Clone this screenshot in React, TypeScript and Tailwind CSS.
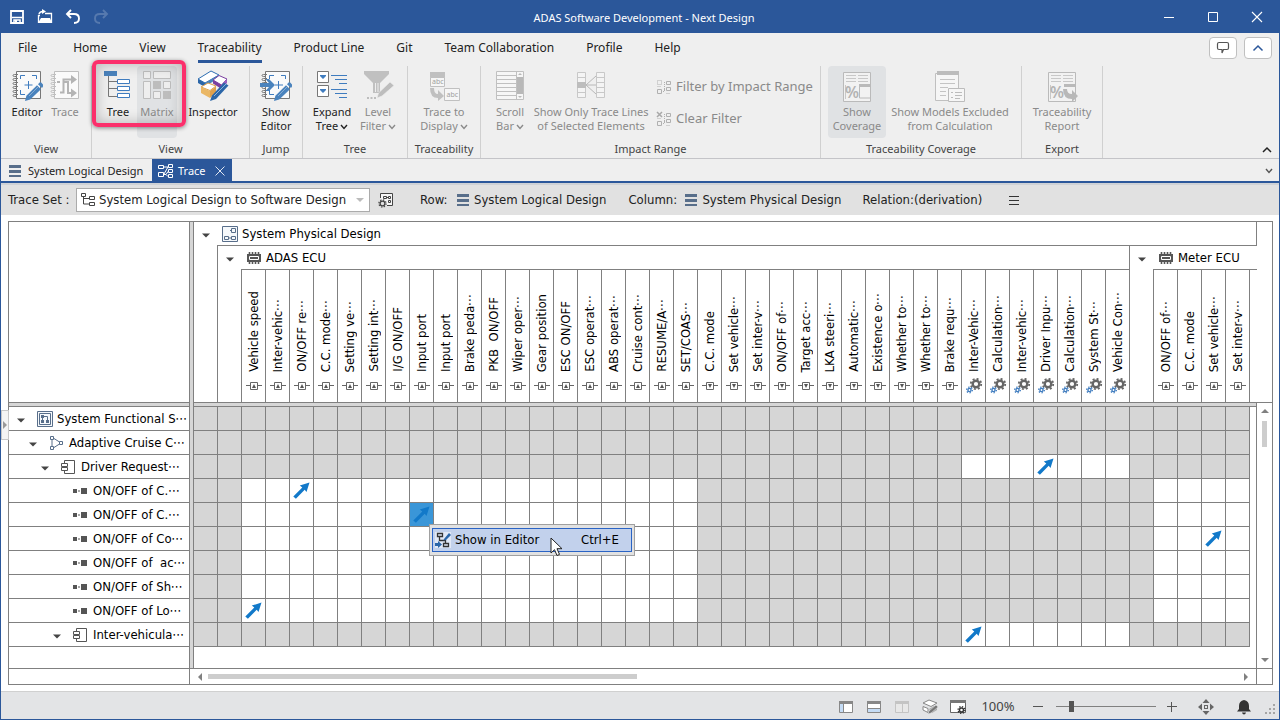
import React from 'react';
import clsx from 'clsx';

type IconProps = { className?: string };

/* ---------- shared pieces ---------- */

const Svg: React.FC<{ w?: number; h?: number; className?: string; children: React.ReactNode }> = ({ w = 16, h = 16, className, children }) => (
  <svg width={w} height={h} viewBox={`0 0 ${w} ${h}`} fill="none" className={clsx('shrink-0', className)} aria-hidden="true">
    {children}
  </svg>
);

const Chevron: React.FC<IconProps> = ({ className }) => (
  <svg width="8" height="6" viewBox="0 0 8 6" fill="none" className={clsx('inline-block ml-0.5', className)} aria-hidden="true">
    <path d="M1 1l3 3.5L7 1" stroke="currentColor" strokeWidth="1.4" />
  </svg>
);

const Triangle = () => (
  <Svg w={12} h={12}>
    <path d="M2 5.5h8L6 9.500z" fill="#444" />
  </Svg>
);

const ListIcon = () => (
  <Svg w={13} h={16}>
    <path d="M0 2h12v3H0zM0 7h12v3H0zM0 12h12v2H0z" fill="#586e8a" />
  </Svg>
);

const Pencil: React.FC<{ color: string }> = ({ color }) => (
  <g>
    <path d="M14 31l1.4-5.2L26 15.2l4 4L19.2 29.6z" fill={color} />
    <path d="M27 14.2l1.6-1.6q.8-.8 1.6 0l2 2q.8.8 0 1.6L31 18z" fill={color} />
    <path d="M18 26l9-9" stroke="#fff" strokeOpacity=".35" />
  </g>
);

const Notebook: React.FC<{ color: string }> = ({ color }) => (
  <g>
    <path d="M5.5 1.5h24v27h-24z" fill="#fff" fillOpacity=".7" stroke={color} />
    {[5, 9, 13, 17, 21, 25].map((y) => (
      <path key={y} d={`M7 ${y - 1}.5H3.5q-1.5 0-1.5 1t1.5 1H5`} stroke={color} />
    ))}
  </g>
);

/* ---------- ribbon icons, 32px ---------- */

const EditorIcon = () => (
  <Svg w={32} h={32}>
    <Notebook color="#777" />
    <path d="M9.5 9V5.5H14M21 5.5h4.5V9M9.5 20v4.5H14M17.5 11v8M13.5 15h8" stroke="#3f7cbf" />
    <Pencil color="#4a83bd" />
  </Svg>
);

const ShowEditorIcon = () => (
  <Svg w={32} h={32}>
    <Notebook color="#777" />
    <path d="M9.5 9V5.5H14M21 5.5h4.5V9M9.5 20v4.5H14M18.5 11v8M15 15h8" stroke="#3f7cbf" />
    <path d="M0 13h9L5.5 9H9l6 6-6 6H5.5L9 17H0z" fill="#4a83bd" />
    <Pencil color="#4a83bd" />
  </Svg>
);

const TraceIcon = () => (
  <Svg w={32} h={32}>
    <Notebook color="#bfbfbf" />
    <path d="M8 12h3M11 22.5h3.5v-13H24M14 12h5v11h6" stroke="#b4b4b4" strokeWidth="2" />
    <path d="M22 5l6 4.5-6 4.5zM22 18.5l6 4.5-6 4.5z" fill="#b4b4b4" />
  </Svg>
);

const TreeIcon = () => (
  <Svg w={32} h={32}>
    <path d="M2 1h13v5H2z" fill="#4a83bd" />
    <path d="M6.5 6v20.500H15M6.500 11.500H15M6.500 18.500H15" stroke="#777" />
    <path d="M15.5 9.5h12v4h-12zM15.5 16.5h12v4h-12zM15.5 23.5h12v4h-12z" fill="#fff" stroke="#3f7cbf" />
  </Svg>
);

const MatrixIcon = () => (
  <Svg w={32} h={32}>
    <path d="M2.5 1.5h7v7h-7zM12.5 1.5h17v7h-17zM2.5 11.5h7v17h-7zM22.5 11.5h7v7h-7zM12.5 21.5h7v7h-7z" fill="#eee" stroke="#bdbdbd" />
    <path d="M12 11h8v8h-8zM22 21h8v8h-8z" fill="#bdbdbd" />
  </Svg>
);

const InspectorIcon = () => (
  <Svg w={32} h={32}>
    <path d="M1 9L14 1l8 4L8 13z" fill="#fff" stroke="#2f6fb3" />
    <path d="M1 9l7 4v4l-7-4z" fill="#2b66a8" />
    <path d="M8 13l13-7.5v3L8 16.5z" fill="#4a83bd" />
    <path d="M16 10l6-4.5 8 3.500-5.500 6z" fill="#fff" stroke="#7b3fa0" />
    <path d="M16 10l8.5 5v4L16 13.5z" fill="#7b3fa0" />
    <path d="M24.5 15L30 9v4l-5.5 6z" fill="#9a5fc0" />
    <path d="M4 17l7-4 8 3-6 4.5z" fill="#fff" stroke="#dfa04b" />
    <path d="M4 17l9 4v7l-9-5z" fill="#eab765" />
    <path d="M13 21l6-4.5v6L13 28z" fill="#dfa04b" />
    <path d="M13 31l2-5.500L27 12.500l4.500 3L19 29z" fill="#2b66a8" />
    <path d="M17 26L29 14" stroke="#8db4dd" />
  </Svg>
);

const ExpandTreeIcon = () => (
  <Svg w={32} h={32}>
    <path d="M1.500 1.500h11v11h-11zM1.500 15.500h11v11h-11z" fill="#fff" stroke="#777" />
    <path d="M4 5h6v1L7 9 4 6zM4 19h6v1l-3 3-3-3z" fill="#3f7cbf" />
    <path d="M15 5.500h16M19 9.500h12M23 13.500h8M15 19.500h16M19 23.500h12M23 27.500h8" stroke="#3f7cbf" />
  </Svg>
);

const FunnelIcon = () => (
  <Svg w={32} h={32}>
    <path d="M2 1h25v3l-9 9v10h-7V13L2 4z" fill="#c0c0c0" />
    <path d="M13.500 13v9M16 13v9" stroke="#eee" />
    <path d="M15 28l1.500-5L28 12l4 3.500L20 26z" fill="#bdbdbd" stroke="#efefef" strokeWidth=".6" />
    <path d="M5 28h9" stroke="#bdbdbd" strokeWidth="2" strokeDasharray="2 1.500" />
  </Svg>
);

const TraceDisplayIcon = () => (
  <Svg w={32} h={32}>
    <path d="M2 2h15v6H2z" fill="#c0c0c0" />
    <path d="M2.500 7.500h14v9h-14zM16.500 18.500h15v12h-15z" fill="#f6f6f6" stroke="#c0c0c0" />
    <text x="4" y="14" fontSize="7" fill="#a0a0a0" fontFamily="Noto Sans, sans-serif">abc</text>
    <text x="18.500" y="27" fontSize="7" fill="#a0a0a0" fontFamily="Noto Sans, sans-serif">abc</text>
    <path d="M2 18h4q0 6 4 6v-4l6 6-6 5v-3q-8 0-8-10z" fill="#c0c0c0" />
  </Svg>
);

const ScrollBarIcon = () => (
  <Svg w={32} h={32}>
    <path d="M2.500 1.500h27v28h-27z" fill="#f6f6f6" stroke="#c0c0c0" />
    <path d="M3 5.500h19M3 9.500h19M3 13.500h19M3 17.500h19M3 21.500h19M3 25.500h19M22.500 2v27" stroke="#c0c0c0" />
    <path d="M23 7h6v17h-6zM24 5h4l-2-2zM24 26h4l-2 2z" fill="#b8b8b8" />
  </Svg>
);

const TraceLinesIcon = () => (
  <Svg w={32} h={32}>
    <path d="M2.500 2.500h8v25h-8zM21.500 2.500h8v25h-8zM3 7.500h7M3 12.500h7M3 17.500h7M3 22.500h7M22 7.500h7M22 12.500h7M22 17.500h7M22 22.500h7" fill="#f4f4f4" stroke="#c8c8c8" />
    <path d="M2 12h9v6H2z" fill="#bdbdbd" />
    <path d="M11 15L21 6M11 15h10M11 15l10 9" stroke="#b8b8b8" />
  </Svg>
);

const CoverageIcon: React.FC<{ report?: boolean }> = ({ report }) => (
  <Svg w={32} h={32}>
    <path d="M2.500 2.500h27v29h-27z" fill="#f2f2f2" stroke="#bababa" />
    <path d="M5 5.500h10M5 8.500h10M5 11.500h10M17 5.500h10M17 8.500h10M17 11.500h10" stroke="#c8c8c8" />
    <path d="M18 14h11v3H18z" fill="#bababa" />
    <path d="M4.500 15v14" stroke="#c8c8c8" />
    <text x="4" y="28" fontSize="16" fontWeight="600" fill="#b4b4b4" fontFamily="Noto Sans, sans-serif">%</text>
    {report ? <path d="M17 19h4q0 5 5 5v-4l6 6-6 6v-3q-9 0-9-10z" fill="#b8b8b8" /> : <path d="M18.500 16v12h11" stroke="#bababa" />}
  </Svg>
);

const ExcludedIcon = () => (
  <Svg w={32} h={34}>
    <path d="M1.500 3.500h23v27h-23z" fill="#f6f6f6" stroke="#c0c0c0" />
    <path d="M3 1h22v4H3z" fill="#bcbcbc" />
    <path d="M6 9.500h15M6 13.500h15M6 17.500h8M6 21.500h6M6 25.500h6" stroke="#c4c4c4" />
    <path d="M14.500 18.500h16v13h-16z" fill="#f6f6f6" stroke="#bcbcbc" />
    <path d="M17 22.500h2M17 27.500h2M21 22.500h7M21 25.500h7M21 28.500h5" stroke="#bcbcbc" />
  </Svg>
);

const FilterSmallIcon: React.FC<{ clear?: boolean }> = ({ clear }) => (
  <Svg>
    {clear ? <path d="M1 1l5 5M6 1L1 6" stroke="#a8a8a8" strokeWidth="1.500" /> : <path d="M1.500 1.500h4v4h-4z" stroke="#b0b0b0" strokeDasharray="1 1" />}
    <path d="M1.500 10.500h4v4h-4zM10.500 2.500h4v3h-4zM10.500 8.500h4v3h-4z" stroke="#b0b0b0" />
    <path d="M5 12.500h3M8.500 3v10M8 3.500h2M8 10.500h2M10.500 14.500h4M1.500 7.500h4" stroke="#b0b0b0" strokeDasharray="1 1" />
  </Svg>
);

/* ---------- model element icons ---------- */

const DiagramIcon = () => (
  <Svg>
    <path d="M.5.5h15v15H.5z" fill="#f5f8fb" stroke="#586e8a" />
    <path d="M9.500 2.500h4v4h-4zM2.500 10.500h4v3h-4zM9.500 10.500h4v3h-4zM6.500 12h3M8 4.500h1" stroke="#586e8a" />
  </Svg>
);

const FunctionalIcon = () => (
  <Svg>
    <path d="M.5.5h15v15H.5z" fill="#f5f8fb" stroke="#586e8a" />
    <path d="M2.500 2.500h11v11h-11z" stroke="#586e8a" />
    <path d="M4 4h3v3H4zM9 9h3v3H9zM4 9h3v3H4z" fill="#586e8a" />
    <path d="M5.500 6v4M6 5.500h4.500V10" stroke="#586e8a" />
  </Svg>
);

const NodesIcon = () => (
  <Svg>
    <path d="M1.500 1.500h3v3h-3zM1.500 11.500h3v3h-3zM10.500 6.500h3v3h-3zM3 5v6M5 3.500l5.500 3.500M5 12.500L10.500 9" stroke="#586e8a" />
  </Svg>
);

const ComponentIcon = () => (
  <Svg>
    <path d="M3.500 4V1.500h10v13h-10V12M3.500 7.500v1" stroke="#555" />
    <path d="M.5 4.500h6v3h-6zM.5 8.500h6v3h-6z" stroke="#555" />
  </Svg>
);

const LeafIcon = () => (
  <Svg>
    <path d="M0 6h4v4H0zM8 5h6v6H8zM5 7.500h2v1H5z" fill="#555" />
  </Svg>
);

const ChipIcon = () => (
  <Svg>
    <path d="M1 4h14v8H1z" fill="#555" />
    <path d="M3.500 2v2M6.500 2v2M9.500 2v2M12.500 2v2M3.500 12v2M6.500 12v2M9.500 12v2M12.500 12v2" stroke="#555" strokeWidth="1.600" />
    <path d="M3.500 6.500h9v3h-9z" stroke="#fff" />
  </Svg>
);

const PortIcon: React.FC<{ down?: boolean }> = ({ down }) => (
  <Svg>
    <path d="M0 7.500h4M12 7.500h4M4.500 4.500h7v7h-7z" stroke="#666" />
    <path d={down ? 'M6 6h4L8 10z' : 'M6 10h4L8 6z'} fill="#555" />
  </Svg>
);

const GearsIcon = () => (
  <Svg w={18} h={16}>
    <circle cx="11" cy="6" r="3.300" stroke="#666" strokeWidth="2.400" />
    <circle cx="11" cy="6" r="5.200" stroke="#666" strokeWidth="1.800" strokeDasharray="2 2.080" />
    <circle cx="4.500" cy="12" r="1.600" stroke="#3f7cbf" strokeWidth="1.400" />
    <circle cx="4.500" cy="12" r="2.900" stroke="#3f7cbf" strokeWidth="1.200" strokeDasharray="1.400 1.600" />
  </Svg>
);

const ArrowIcon = () => (
  <Svg w={18} h={18}>
    <path d="M.3 14.500l9-9-2.500-1.900L16.500.500 13.500 10l-1.800-2.300-8.800 9z" fill="#1279c9" />
  </Svg>
);

/* ---------- title bar and menu ---------- */

const TitleBar = () => (
  <header className="flex h-8 items-center bg-[#2b579a] px-2 text-white">
    <div className="flex flex-1 items-center gap-3">
      <button aria-label="Save">
        <Svg>
          <path d="M2 2h12v12H2z" stroke="#fff" strokeWidth="1.800" />
          <path d="M3 8.500h10M5 15v-4h6v4" stroke="#fff" strokeWidth="1.500" />
          <path d="M6 11h2v3H6z" fill="#fff" />
        </Svg>
      </button>
      <button aria-label="Open">
        <Svg>
          <path d="M1 6.500h2M8 4.500h6.500V14M1.500 6v8" stroke="#fff" strokeWidth="1.300" />
          <path d="M1 14l3-5h9l2 5z" fill="#fff" />
          <path d="M2 5q1-3 5-2.500" stroke="#fff" strokeWidth="1.500" />
          <path d="M5 0l4 2.500L5 5z" fill="#fff" />
        </Svg>
      </button>
      <button aria-label="Undo">
        <Svg>
          <path d="M6 1L2 5l4 4M2 5h7q5 0 5 4.500T9 14" stroke="#fff" strokeWidth="1.900" />
        </Svg>
      </button>
      <button aria-label="Redo" disabled className="opacity-20">
        <Svg>
          <path d="M10 1l4 4-4 4M14 5H7Q2 5 2 9.500T7 14" stroke="#fff" strokeWidth="1.900" />
        </Svg>
      </button>
    </div>
    <h1 className="pt-0.5 text-[11px]">ADAS Software Development - Next Design</h1>
    <div className="-mr-2 flex flex-1 justify-end">
      <button aria-label="Minimize" className="flex w-11 justify-center"><Svg w={12} h={12}><path d="M1 6.500h10" stroke="#fff" /></Svg></button>
      <button aria-label="Maximize" className="flex w-11 justify-center"><Svg w={12} h={12}><path d="M1.500 1.500h9v9h-9z" stroke="#fff" /></Svg></button>
      <button aria-label="Close" className="flex w-11 justify-center"><Svg w={12} h={12}><path d="M1 1l10 10M11 1L1 11" stroke="#fff" strokeWidth="1.100" /></Svg></button>
    </div>
  </header>
);

const MENUS = ['File', 'Home', 'View', 'Traceability', 'Product Line', 'Git', 'Team Collaboration', 'Profile', 'Help'];

const MenuBar = () => (
  <nav className="flex h-[33px] items-start justify-between pr-[7px] pl-px">
    <ul className="flex h-full text-[12px]">
      {MENUS.map((m) => (
        <li key={m} className={clsx('flex flex-col px-4', m === 'Home' && 'pl-5')}>
          <button className={clsx('h-[30px] border-b-[3px] pt-0.5', m === 'Traceability' ? 'border-[#2b579a]' : 'border-transparent')}>{m}</button>
        </li>
      ))}
    </ul>
    <div className="flex gap-[7px] pt-1">
      <button aria-label="Feedback" className="flex h-[22px] w-7 items-center justify-center rounded-sm border border-[#c0c0c0] bg-white">
        <Svg w={14} h={14}><path d="M3 1.500h8q1.500 0 1.500 1.500v4q0 1.500-1.500 1.500H7.500L6 12V8.500H3Q1.500 8.500 1.500 7V3Q1.500 1.500 3 1.500z" stroke="#555" strokeWidth="1.200" /></Svg>
      </button>
      <button aria-label="Collapse" className="flex h-[22px] w-7 items-center justify-center rounded-sm border border-[#c0c0c0] bg-white">
        <Svg w={12} h={12}><path d="M1.500 8.500L6 4l4.500 4.500" stroke="#2b579a" strokeWidth="1.500" /></Svg>
      </button>
    </div>
  </nav>
);

/* ---------- ribbon ---------- */

type RibbonButtonProps = {
  icon: React.ReactNode;
  lines: string[];
  menu?: boolean;
  disabled?: boolean;
  active?: boolean;
  className?: string;
};

const RibbonButton: React.FC<RibbonButtonProps> = ({ icon, lines, menu, disabled, active, className }) => (
  <button
    disabled={disabled}
    className={clsx(
      'flex h-[72px] shrink-0 flex-col items-center rounded-sm pt-1 text-[11px] leading-[14px] whitespace-nowrap',
      disabled ? 'text-[#8a8a8a]' : 'text-[#222]',
      active && 'bg-[#e0e2e4]',
      className,
    )}
  >
    <span className="flex h-[35px] items-start">{icon}</span>
    {lines.map((line, i) => (
      <span key={line}>
        {line}
        {menu && i === lines.length - 1 && <Chevron />}
      </span>
    ))}
  </button>
);

const RibbonGroup: React.FC<{ label: string; className?: string; children: React.ReactNode }> = ({ label, className, children }) => (
  <section className={clsx('flex shrink-0 flex-col border-r border-[#d0d0d0]', className)}>
    <div className="flex h-[74px] justify-center">{children}</div>
    <h2 className="pt-px text-center text-[11px] leading-[18px] text-[#444]">{label}</h2>
  </section>
);

const Ribbon = () => (
  <div className="flex h-[93px] border-b border-[#c4c4c8]">
    <RibbonGroup label="View" className="w-[91px]">
      <RibbonButton icon={<EditorIcon />} lines={['Editor']} className="w-[38px]" />
      <RibbonButton icon={<TraceIcon />} lines={['Trace']} disabled className="w-[38px]" />
    </RibbonGroup>
    <RibbonGroup label="View" className="relative w-[158px]">
      <RibbonButton icon={<TreeIcon />} lines={['Tree']} className="ml-[7px] w-[38px]" />
      <RibbonButton icon={<MatrixIcon />} lines={['Matrix']} disabled active className="w-10" />
      <RibbonButton icon={<InspectorIcon />} lines={['Inspector']} className="w-[72px]" />
      {/* callout ring over the two view switches */}
      <div className="pointer-events-none absolute -top-1.5 left-0 h-[67px] w-[94px] rounded-md border-4 border-[#fb2f6b] shadow-[0_1px_4px_rgba(0,0,0,0.45),inset_0_0_14px_rgba(0,0,0,0.25)]" />
    </RibbonGroup>
    <RibbonGroup label="Jump" className="w-[53px]">
      <RibbonButton icon={<ShowEditorIcon />} lines={['Show', 'Editor']} />
    </RibbonGroup>
    <RibbonGroup label="Tree" className="w-[105px]">
      <RibbonButton icon={<ExpandTreeIcon />} lines={['Expand', 'Tree']} menu className="w-[46px]" />
      <RibbonButton icon={<FunnelIcon />} lines={['Level', 'Filter']} menu disabled className="w-[46px]" />
    </RibbonGroup>
    <RibbonGroup label="Traceability" className="w-[73px]">
      <RibbonButton icon={<TraceDisplayIcon />} lines={['Trace to', 'Display']} menu disabled />
    </RibbonGroup>
    <RibbonGroup label="Impact Range" className="w-[340px]">
      <RibbonButton icon={<ScrollBarIcon />} lines={['Scroll', 'Bar']} menu disabled className="w-11" />
      <RibbonButton icon={<TraceLinesIcon />} lines={['Show Only Trace Lines', 'of Selected Elements']} disabled className="w-[118px]" />
      <div className="flex flex-col gap-3 pt-[11px] pl-1.5 text-[13px] text-[#8a8a8a]">
        <button disabled className="flex h-5 items-center gap-1 whitespace-nowrap"><FilterSmallIcon />Filter by Impact Range</button>
        <button disabled className="flex h-5 items-center gap-1 whitespace-nowrap"><FilterSmallIcon clear />Clear Filter</button>
      </div>
    </RibbonGroup>
    <RibbonGroup label="Traceability Coverage" className="w-[201px]">
      <RibbonButton icon={<CoverageIcon />} lines={['Show', 'Coverage']} disabled active className="w-[58px]" />
      <RibbonButton icon={<ExcludedIcon />} lines={['Show Models Excluded', 'from Calculation']} disabled className="w-[128px]" />
    </RibbonGroup>
    <RibbonGroup label="Export" className="w-[81px]">
      <RibbonButton icon={<CoverageIcon report />} lines={['Traceability', 'Report']} disabled />
    </RibbonGroup>
    <div className="flex flex-1 items-end justify-end p-1">
      <button aria-label="Collapse ribbon"><Svg w={16} h={8}><path d="M4 6l4-4 4 4" stroke="#222" strokeWidth="1.500" /></Svg></button>
    </div>
  </div>
);

/* ---------- document tabs and trace toolbar ---------- */

const DocumentTabs = () => (
  <div className="flex h-6 items-stretch border-b-2 border-[#2b579a] text-[11px]">
    <button className="flex w-[151px] items-center gap-1.5 pt-0.5 pl-2"><ListIcon />System Logical Design</button>
    <div className="flex w-20 items-center gap-1 bg-[#2b579a] pt-0.5 pl-1.5 text-white">
      <Svg>
        <path d="M.5 2.500h5v3h-5zM.5 9.500h5v4h-5zM10.500 1.500h4v3h-4zM10.500 6.500h4v3h-4zM10.500 11.500h4v3h-4zM6 4h4M6 11.500h2l2-3M8 11.500l2 2M6 11l4-7" stroke="#fff" />
      </Svg>
      Trace
      <button aria-label="Close tab" className="ml-1"><Svg w={12} h={12}><path d="M1.500 1.500l9 9M10.500 1.500l-9 9" stroke="#dfe6f1" /></Svg></button>
    </div>
    <div className="flex flex-1 items-center justify-end pr-1.5">
      <button aria-label="Tab list" className="text-[#555]"><Chevron /></button>
    </div>
  </div>
);

const TraceToolbar = () => (
  <div className="flex h-8 items-center border-t-2 border-[#cfd2d6] bg-[#e1e1e1] pl-[7px] font-['DejaVu_Sans_Condensed','DejaVu_Sans',sans-serif] text-[13px] text-[#222]">
    <label htmlFor="trace-set" className="w-[68px] whitespace-nowrap">Trace Set :</label>
    <div className="flex h-6 w-[294px] items-center border border-[#ababab] bg-white pl-1">
      <Svg>
        <path d="M.5 1.500h4v3h-4zM8.500 4.500h5v3h-5zM8.500 10.500h5v3h-5zM2.500 5v7h6M2.500 6.500h6" stroke="#444" />
      </Svg>
      <select id="trace-set" className="flex-1 appearance-none bg-transparent pl-0.5 outline-none">
        <option>System Logical Design to Software Design</option>
      </select>
      <Svg w={16} h={16}><path d="M3 6h8l-4 4z" fill="#bbb" /></Svg>
    </div>
    <button aria-label="Trace set settings" className="ml-2">
      <Svg>
        <path d="M2.500 6V1.500h12v12H9" fill="#f6f6f6" stroke="#444" />
        <path d="M5.500 4.500h3v2h-3zM10.500 4.500h2v2h-2zM10.500 8.500h2v2h-2zM8.500 5.500h2" stroke="#444" />
        <circle cx="4.500" cy="11.500" r="2.400" fill="#e1e1e1" stroke="#444" strokeWidth="1.300" />
        <circle cx="4.500" cy="11.500" r="3.600" stroke="#444" strokeWidth="1.200" strokeDasharray="1.400 1.430" />
      </Svg>
    </button>
    <dl className="flex items-center whitespace-nowrap">
      <dt className="ml-[26px] w-[37px]">Row:</dt>
      <dd className="flex items-center gap-1"><ListIcon />System Logical Design</dd>
      <dt className="ml-[22px] w-[57px]">Column:</dt>
      <dd className="flex items-center gap-1"><ListIcon />System Physical Design</dd>
      <dt className="ml-[21px]">Relation:</dt>
      <dd>(derivation)</dd>
    </dl>
    <button aria-label="More" className="ml-6"><Svg><path d="M3 4.500h10M3 8.500h10M3 12.500h10" stroke="#333" /></Svg></button>
  </div>
);

/* ---------- matrix ---------- */

type Column = { name: string; kind: 'up' | 'down' | 'gears' };

const up = (name: string): Column => ({ name, kind: 'up' });
const down = (name: string): Column => ({ name, kind: 'down' });
const gears = (name: string): Column => ({ name, kind: 'gears' });

const ADAS: Column[] = [
  up('Vehicle speed'), up('Inter-vehic⋯'), up('ON/OFF re⋯'), up('C.C. mode⋯'), up('Setting ve⋯'), up('Setting int⋯'),
  up('I/G ON/OFF'), up('Input port'), up('Input port'), up('Brake peda⋯'), up('PKB  ON/OFF'), up('Wiper oper⋯'),
  up('Gear position'), up('ESC ON/OFF'), up('ESC operat⋯'), up('ABS operat⋯'), up('Cruise cont⋯'), up('RESUME/A⋯'), up('SET/COAS⋯'),
  down('C.C. mode'), down('Set vehicle⋯'), down('Set inter-v⋯'), down('ON/OFF of⋯'), down('Target acc⋯'), down('LKA steeri⋯'),
  down('Automatic⋯'), down('Existence o⋯'), down('Whether to⋯'), down('Whether to⋯'), down('Brake requ⋯'),
  gears('Inter-Vehic⋯'), gears('Calculation⋯'), gears('Inter-vehic⋯'), gears('Driver Inpu⋯'), gears('Calculation⋯'), gears('System St⋯'), gears('Vehicle Con⋯'),
];

const METER: Column[] = [up('ON/OFF of⋯'), up('C.C. mode'), up('Set vehicle⋯'), up('Set inter-v⋯')];

const COLUMN_COUNT = 3 + ADAS.length + METER.length;

type Row = { name: string; depth: number; icon: React.ReactNode; leaf?: boolean; open: [number, number][]; links: number[] };

// open: ranges of cells that can hold a link, the others are shaded
const PORTS: [number, number][] = [[2, 21], [40, 44]];
const FUNCTIONS: [number, number][] = [[32, 39]];

const ROWS: Row[] = [
  { name: 'System Functional S⋯', depth: 0, icon: <FunctionalIcon />, open: [], links: [] },
  { name: 'Adaptive Cruise C⋯', depth: 1, icon: <NodesIcon />, open: [], links: [] },
  { name: 'Driver Request⋯', depth: 2, icon: <ComponentIcon />, open: FUNCTIONS, links: [35] },
  { name: 'ON/OFF of C.⋯', depth: 3, icon: <LeafIcon />, leaf: true, open: PORTS, links: [4] },
  { name: 'ON/OFF of C.⋯', depth: 3, icon: <LeafIcon />, leaf: true, open: PORTS, links: [9] },
  { name: 'ON/OFF of Co⋯', depth: 3, icon: <LeafIcon />, leaf: true, open: PORTS, links: [42] },
  { name: 'ON/OFF of  ac⋯', depth: 3, icon: <LeafIcon />, leaf: true, open: PORTS, links: [] },
  { name: 'ON/OFF of Sh⋯', depth: 3, icon: <LeafIcon />, leaf: true, open: PORTS, links: [] },
  { name: 'ON/OFF of Lo⋯', depth: 3, icon: <LeafIcon />, leaf: true, open: PORTS, links: [2] },
  { name: 'Inter-vehicula⋯', depth: 3, icon: <ComponentIcon />, open: FUNCTIONS, links: [32] },
];

const SELECTED = { row: 4, col: 9 };
const INDENT = ['pl-1.5', 'pl-[18px]', 'pl-[30px]', 'pl-[42px]'];

const GroupHeader: React.FC<{ name: string; icon: React.ReactNode }> = ({ name, icon }) => (
  <div className="flex items-center pt-px pl-1.5 leading-4 whitespace-nowrap">
    <Triangle />
    <span className="mr-1 ml-2.5">{icon}</span>
    {name}
  </div>
);

const ColumnHeader: React.FC<{ column: Column }> = ({ column }) => (
  <th scope="col" className="border-t border-r border-b border-[#808080] p-0 align-bottom font-normal">
    <div className="flex flex-col items-center gap-1.5 pb-2">
      <span className="rotate-180 leading-4 whitespace-pre [writing-mode:vertical-rl]">{column.name}</span>
      {column.kind === 'gears' ? <GearsIcon /> : <PortIcon down={column.kind === 'down'} />}
    </div>
  </th>
);

const ContextMenu = () => (
  <div role="menu" className="absolute top-[21px] left-[19px] z-10 w-[206px] border border-[#a0a0a0] bg-[#e1e1e1] px-0.5 py-[3px]">
    <button role="menuitem" className="flex h-6 w-full items-center gap-1 border border-[#2a63c4] bg-[#c2d1ec] pr-3 pl-0.5 text-left text-black">
      <Svg>
        <path d="M0 0h16v16H0z" fill="#fff" fillOpacity=".5" />
        <path d="M2.500 1.500h5v3h-5zM8.500 11.500h5v3h-5zM4.500 5v3.500h6V11" stroke="#333" strokeWidth="1.300" />
        <path d="M9 7l5-6 2 2-5 5-2.500.5zM0 11h3V9l4 3.500L3 16v-2H0z" fill="#2b66a8" />
      </Svg>
      <span className="flex-1">Show in Editor</span>
      <kbd className="font-[inherit]">Ctrl+E</kbd>
    </button>
    <svg width="14" height="20" viewBox="0 0 14 20" className="absolute top-3 left-[120px]" aria-hidden="true">
      <path d="M1 1v15l3.500-3.300L7 18.500l2.500-1.100L7 11.700h5z" fill="#fff" stroke="#222" />
    </svg>
  </div>
);

const Matrix = () => (
  <table className="w-full table-fixed border-separate border-spacing-0 border-t border-l border-[#808080] bg-white font-['DejaVu_Sans_Condensed','DejaVu_Sans',sans-serif] text-[13px] text-black">
    <colgroup>
      <col className="w-[181px]" />
      <col className="w-1" />
      {Array.from({ length: COLUMN_COUNT }, (_, i) => <col key={i} className="w-6" />)}
      <col />
      <col className="w-4" />
    </colgroup>
    <thead className="text-left">
      <tr className="h-[23px]">
        <td rowSpan={3} className="border-r border-b border-[#808080] p-0" />
        <td rowSpan={3} className="border-r border-[#808080] bg-[#d6d6d6] p-0" />
        <th colSpan={COLUMN_COUNT + 1} className="border-r border-[#808080] p-0 font-normal">
          <GroupHeader name="System Physical Design" icon={<DiagramIcon />} />
        </th>
        <td rowSpan={3} className="border-r border-b border-[#808080] p-0" />
      </tr>
      <tr className="h-6">
        <td rowSpan={2} className="border-r border-b border-[#808080] p-0" />
        <th colSpan={ADAS.length + 1} className="border-t border-r border-[#808080] p-0 font-normal">
          <GroupHeader name="ADAS ECU" icon={<ChipIcon />} />
        </th>
        <th colSpan={METER.length + 2} className="border-t border-[#808080] p-0 font-normal">
          <GroupHeader name="Meter ECU" icon={<ChipIcon />} />
        </th>
      </tr>
      <tr className="h-[134px]">
        <td className="border-r border-b border-[#808080] p-0" />
        {ADAS.map((c, i) => <ColumnHeader key={i} column={c} />)}
        <td className="border-r border-b border-[#808080] p-0" />
        {METER.map((c, i) => <ColumnHeader key={i} column={c} />)}
        <td className="border-t border-b border-[#808080] p-0" />
      </tr>
    </thead>
    <tbody>
      <tr className="h-1">
        <td className="border-r border-b border-[#808080] bg-[#d6d6d6] p-0" />
        <td rowSpan={ROWS.length + 2} className="border-r border-b border-[#808080] bg-[#d6d6d6] p-0" />
        <td colSpan={COLUMN_COUNT + 1} className="border-r border-b border-[#808080] bg-[#d6d6d6] p-0" />
        <td rowSpan={ROWS.length + 2} className="border-r border-b border-[#808080] p-0 align-top">
          <div className="flex h-[265px] flex-col items-center justify-between py-1">
            <div className="flex flex-col items-center gap-1.5">
              <Svg w={8} h={8}><path d="M0 6h8L4 2z" fill="#808080" /></Svg>
              <div className="h-[26px] w-[5px] bg-[#cdcdcd]" />
            </div>
            <Svg w={8} h={8}><path d="M0 2h8L4 6z" fill="#808080" /></Svg>
          </div>
        </td>
      </tr>
      {ROWS.map((row, r) => (
        <tr key={r} className="h-6">
          <th scope="row" className="border-r border-b border-[#808080] p-0 text-left font-normal">
            <div className={clsx('flex items-center leading-4 whitespace-pre', INDENT[row.depth])}>
              {row.leaf ? <span className="w-3 shrink-0" /> : <Triangle />}
              <span className="mr-1 ml-2.5">{row.icon}</span>
              {row.name}
            </div>
          </th>
          {Array.from({ length: COLUMN_COUNT }, (_, c) => {
            const open = row.open.some(([from, to]) => c >= from && c < to);
            const selected = SELECTED.row === r && SELECTED.col === c;
            return (
              <td key={c} className={clsx('border-r border-b border-[#808080] p-0', selected ? 'bg-[#3a96d8]' : open ? 'bg-white' : 'bg-[#d6d6d6]')}>
                {row.links.includes(c) && (
                  <div className="relative flex h-[23px] items-center justify-center">
                    <ArrowIcon />
                    {selected && <ContextMenu />}
                  </div>
                )}
              </td>
            );
          })}
          <td className="border-r border-[#808080] p-0" />
        </tr>
      ))}
      <tr className="h-[22px]">
        <td className="border-r border-b border-[#808080] p-0" />
        <td colSpan={COLUMN_COUNT + 1} className="border-r border-b border-[#808080] p-0" />
      </tr>
      <tr className="h-4">
        <td className="border-r border-b border-[#808080] p-0" />
        <td colSpan={COLUMN_COUNT + 2} className="border-r border-b border-[#808080] p-0">
          <div className="flex items-center gap-1 px-1.5">
            <Svg w={8} h={8}><path d="M6 0v8L2 4z" fill="#808080" /></Svg>
            <div className="flex-1"><div className="h-[5px] w-5/12 bg-[#cdcdcd]" /></div>
            <Svg w={8} h={8}><path d="M2 0v8l4-4z" fill="#808080" /></Svg>
          </div>
        </td>
        <td className="border-r border-b border-[#808080] p-0" />
      </tr>
    </tbody>
  </table>
);

/* ---------- status bar ---------- */

const StatusBar = () => (
  <footer className="flex h-7 items-center justify-end border-t border-[#d0d0d0] bg-[#e3e4e6] pt-0.5 pr-[3px] text-[12px] text-[#444]">
    <div className="flex gap-3">
      <button aria-label="Side pane"><Svg><path d="M1.500 2.500h13v11h-13z" fill="#fff" stroke="#888" /><path d="M1 2h14v3H1z" fill="#888" /><path d="M2 5h3v8H2z" fill="#c5dcf5" /><path d="M5.500 5v8" stroke="#888" /></Svg></button>
      <button aria-label="Bottom pane"><Svg><path d="M1.500 2.500h13v11h-13z" fill="#fff" stroke="#888" /><path d="M1 2h14v3H1z" fill="#888" /><path d="M2 10h12v3H2z" fill="#c5dcf5" /><path d="M2 9.500h12" stroke="#888" /></Svg></button>
      <button aria-label="Split pane" disabled><Svg><path d="M1.500 2.500h13v11h-13zM8.500 4v9" fill="#e8e8e8" stroke="#c4c4c4" /><path d="M1 2h14v3H1z" fill="#c4c4c4" /></Svg></button>
      <button aria-label="Inspector">
        <Svg>
          <path d="M1 4l6-3 8 3-6 3.500zM1 7.500l5 2v4l-5-2.500z" fill="#fff" stroke="#888" />
          <path d="M7 10l5-3 3 1.500V11l-5 3z" fill="#aaa" />
          <path d="M6 15l1-3 7-6 2 2-7 6z" fill="#777" stroke="#e3e4e6" strokeWidth=".5" />
        </Svg>
      </button>
      <button aria-label="Window settings">
        <Svg>
          <path d="M.5 2.500h15v11H.5z" fill="#fff" stroke="#666" />
          <path d="M0 1h16v3H0z" fill="#777" />
          <circle cx="11.500" cy="11" r="2" fill="#fff" stroke="#333" strokeWidth="1.400" />
          <circle cx="11.500" cy="11" r="3.400" stroke="#333" strokeWidth="1.400" strokeDasharray="1.300 1.370" />
        </Svg>
      </button>
    </div>
    <output className="ml-2 w-12 text-center text-[13px]">100%</output>
    <button aria-label="Zoom out" className="ml-2"><Svg><path d="M3 7.500h10" stroke="#555" /></Svg></button>
    <input
      type="range"
      aria-label="Zoom"
      min={0}
      max={100}
      defaultValue={14}
      className="mr-2 ml-2.5 h-4 w-[100px] appearance-none bg-transparent [&::-webkit-slider-runnable-track]:h-px [&::-webkit-slider-runnable-track]:bg-[#808080] [&::-webkit-slider-thumb]:-mt-[5px] [&::-webkit-slider-thumb]:h-[11px] [&::-webkit-slider-thumb]:w-[5px] [&::-webkit-slider-thumb]:appearance-none [&::-webkit-slider-thumb]:bg-[#555]"
    />
    <button aria-label="Zoom in"><Svg><path d="M3 7.500h10M7.500 3v10" stroke="#555" /></Svg></button>
    <button aria-label="Fit" className="ml-[18px]">
      <Svg>
        <path d="M8 0l3.500 4h-7zM8 16l3.500-4h-7zM0 8l4-3.500v7zM16 8l-4-3.500v7zM6 6h4v4H6z" fill="#666" />
        <path d="M7 7h2v2H7z" fill="#e3e4e6" />
      </Svg>
    </button>
    <button aria-label="Notifications" className="ml-[22px]">
      <Svg><path d="M8 1q5 1 5 6v3l2 2.500H1L3 10V7q0-5 5-6zM6 13.500h4q-.5 2-2 2t-2-2z" fill="#333" /></Svg>
    </button>
    <Svg w={12} h={14} className="mt-2 ml-3">
      <path d="M9 0h2v2H9zM9 4h2v2H9zM9 8h2v2H9zM5 4h2v2H5zM5 8h2v2H5zM1 8h2v2H1z" fill="#a5a5a5" />
    </Svg>
  </footer>
);

export default function App() {
  return (
    <div className="flex min-h-screen flex-col overflow-hidden border border-[#2b579a] bg-[#efefef] font-['Noto_Sans',sans-serif] text-[#222]">
      <TitleBar />
      <MenuBar />
      <Ribbon />
      <DocumentTabs />
      <TraceToolbar />
      <main className="relative flex-1 bg-white pt-1.5 pr-1.5 pb-1.5 pl-[7px]">
        <Matrix />
        <button aria-label="Expand side pane" className="absolute top-[195px] left-0 flex h-[30px] w-2 items-center justify-center border border-[#c8c8c8] bg-[#f4f4f4]">
          <Svg w={4} h={8}><path d="M0 0l4 4-4 4z" fill="#999" /></Svg>
        </button>
      </main>
      <StatusBar />
    </div>
  );
}
